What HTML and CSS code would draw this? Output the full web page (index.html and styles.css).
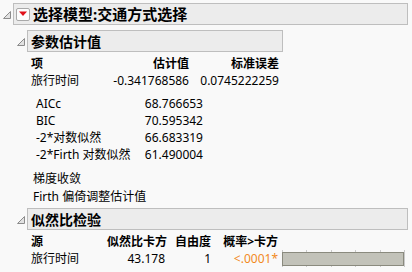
FILE: index.html
```html
<!DOCTYPE HTML>
<html lang="zh">
  <head>
    <title>选择模型</title>
    <meta charset="utf-8">
    <link rel="stylesheet" href="styles.css">
  </head>
  <body>

  <div class="report">
    <div class="node">
      <div class="node-head">
        <svg class="tri" width="8" height="8" viewBox="0 0 8 8"><polygon points="7.5,0.5 7.5,7.5 0.5,7.5" fill="#e2e2e2" stroke="#8c8c8c" stroke-width="1"/></svg>
        <div class="box box-top">
          <span class="menu-btn">
            <svg width="10" height="6" viewBox="0 0 10 6"><polygon points="1,0.5 9,0.5 5,5" fill="#e0101a"/></svg>
          </span>
          <span class="title">选择模型:交通方式选择</span>
        </div>
      </div>

      <div class="node-body">
        <div class="node">
          <div class="node-head">
            <svg class="tri" width="8" height="8" viewBox="0 0 8 8"><polygon points="7.5,0.5 7.5,7.5 0.5,7.5" fill="#e2e2e2" stroke="#8c8c8c" stroke-width="1"/></svg>
            <div class="box box-fixed"><span class="subtitle">参数估计值</span></div>
          </div>
          <div class="content">
            <div class="est-table">
              <span class="th">项</span><span class="th num">估计值</span><span class="th num">标准误差</span>
              <span>旅行时间</span><span class="num">-0.341768586</span><span class="num">0.0745222259</span>
            </div>
            <div class="stats">
              <span>AICc</span><span class="num">68.766653</span>
              <span>BIC</span><span class="num">70.595342</span>
              <span>-2*对数似然</span><span class="num">66.683319</span>
              <span>-2*Firth 对数似然</span><span class="num">61.490004</span>
            </div>
            <div class="notes">
              <div>梯度收敛</div>
              <div>Firth 偏倚调整估计值</div>
            </div>
          </div>
        </div>

        <div class="node node-lr">
          <div class="node-head">
            <svg class="tri" width="8" height="8" viewBox="0 0 8 8"><polygon points="7.5,0.5 7.5,7.5 0.5,7.5" fill="#e2e2e2" stroke="#8c8c8c" stroke-width="1"/></svg>
            <div class="box"><span class="subtitle">似然比检验</span></div>
          </div>
          <div class="content">
            <div class="lr-table">
              <span class="th">源</span><span class="th num">似然比卡方</span><span class="th num">自由度</span><span class="th num">概率&gt;卡方</span><span></span>
              <span>旅行时间</span><span class="num">43.178</span><span class="num">1</span><span class="num pval">&lt;.0001*</span>
              <span class="pbar">
                <span class="tick" style="left: 0%"></span>
                <span class="tick" style="left: 20%"></span>
                <span class="tick" style="left: 40%"></span>
                <span class="tick" style="left: 60%"></span>
                <span class="tick" style="left: 80%"></span>
                <span class="tick" style="left: 100%"></span>
                <span class="fill"></span>
              </span>
            </div>
          </div>
        </div>
      </div>
    </div>
  </div>

  </body>
</html>
```

FILE: styles.css
```css
html {
  height: 100%;
}
body {
  margin: 0;
  padding: 0;
  background: #f9f9f9;
  color: #000000;
  font-family: "Noto Sans", "Noto Sans CJK SC", sans-serif;
  font-size: 12px;
  line-height: 17px;
  white-space: nowrap;
}
.report {
  width: 405px;
  padding: 3px 0 0 3px;
}
.node-head {
  display: flex;
  align-items: center;
  gap: 2px;
}
.tri {
  flex: none;
  display: block;
  margin-top: 2px;
}
.box {
  flex: 1;
  box-sizing: border-box;
  height: 22px;
  display: flex;
  align-items: center;
  background: #ececec;
  border: 1px solid #bebebe;
}
.box-fixed {
  flex: none;
  width: 256px;
}
.box-top {
  padding-left: 2px;
  gap: 3px;
}
.menu-btn {
  box-sizing: border-box;
  width: 14px;
  height: 13px;
  display: flex;
  align-items: center;
  justify-content: center;
  background: #fdfdfd;
  border: 1px solid #a9a9a9;
  border-radius: 2px;
}
.menu-btn svg {
  display: block;
}
.title {
  font-size: 15px;
  font-weight: bold;
}
.subtitle {
  padding-left: 3px;
  font-size: 14px;
  font-weight: bold;
}
.node-body {
  padding-left: 14px;
  padding-top: 5px;
}
.content {
  padding-left: 14px;
}
.th {
  font-weight: bold;
}
.num {
  text-align: right;
}
.est-table {
  display: grid;
  grid-template-columns: 78px 80px 90px;
  padding-top: 3px;
}
.stats {
  display: grid;
  grid-template-columns: 100px 67px;
  padding: 6px 0 0 5px;
}
.notes {
  padding: 7px 0 0 2px;
  line-height: 18px;
}
.node-lr {
  margin-top: 2px;
}
.lr-table {
  display: grid;
  grid-template-columns: 76px 58px 46px 67px 126px;
  padding-top: 3px;
  align-items: center;
}
.pval {
  color: #f28a1e;
}
.pbar {
  position: relative;
  height: 14px;
  margin-left: 4px;
}
.fill {
  position: absolute;
  left: 0;
  right: 0;
  top: 0;
  bottom: 0;
  background: #c2c2b9;
  border: 1px solid #8a8a7e;
}
.tick {
  position: absolute;
  top: -2px;
  bottom: -2px;
  width: 1px;
  background: #c9c9c9;
}
```
